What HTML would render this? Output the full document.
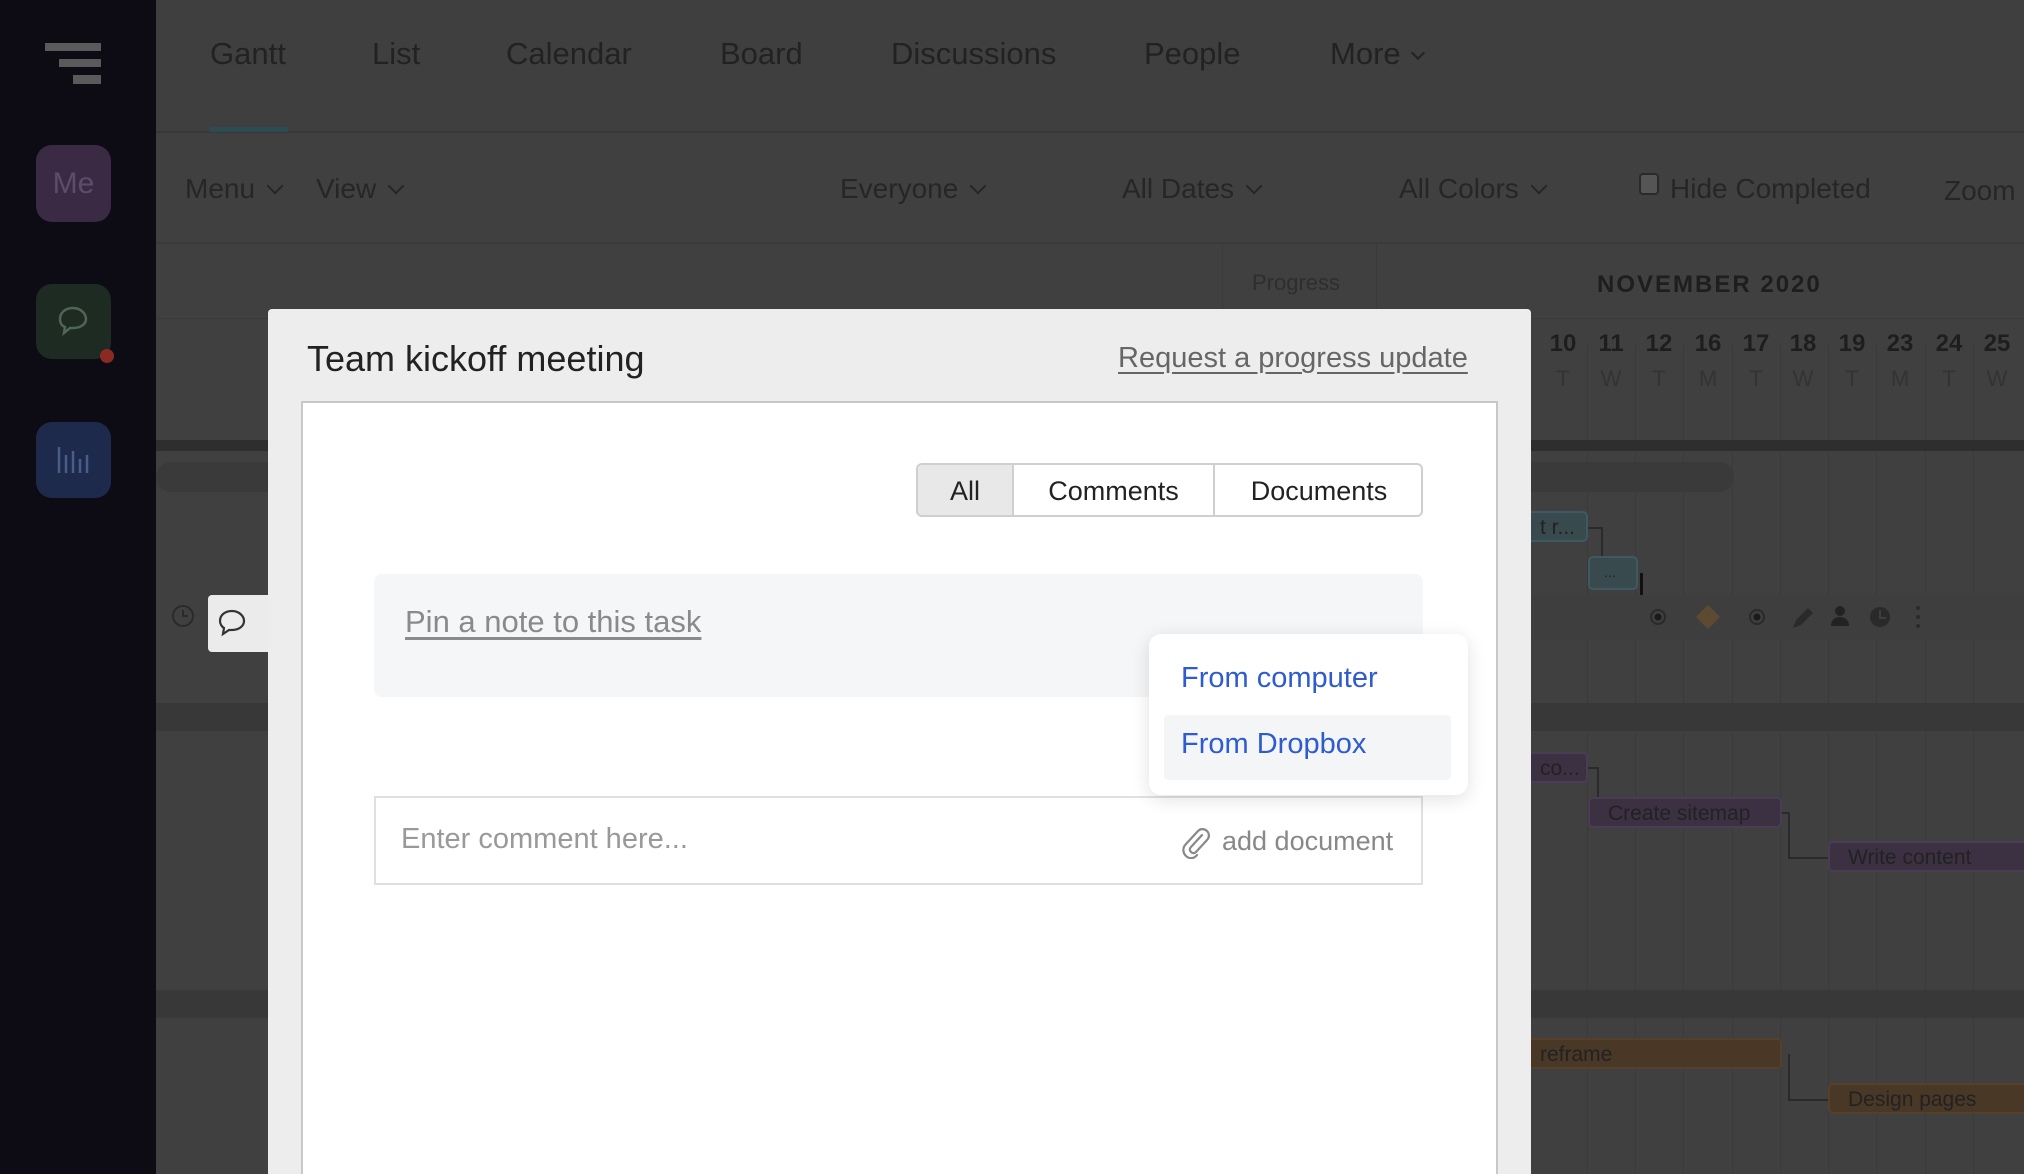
<!DOCTYPE html>
<html><head><meta charset="utf-8"><style>
*{margin:0;padding:0;box-sizing:border-box}
html,body{width:2024px;height:1174px;overflow:hidden}
body{background:#404040;font-family:"Liberation Sans",sans-serif;position:relative}
.a{position:absolute;white-space:nowrap}
.side{left:0;top:0;width:156px;height:1174px;background:#0d0c14}
.nav{left:156px;top:0;right:0;height:133px;background:#3f3f3f;border-bottom:2px solid #383838}
.tab{top:36px;font-size:31px;color:#222}
.tb{top:173px;font-size:28px;color:#262626}
.chev{display:inline-block;width:12px;height:12px;border-right:2.5px solid #262626;border-bottom:2.5px solid #262626;transform:rotate(45deg);margin-left:14px;position:relative;top:-6px}
.vl{top:345px;width:1px;height:830px;background:#3a3a3a}
.dn{top:330px;font-size:24px;font-weight:bold;color:#1e1e1e;width:40px;text-align:center}
.dl{top:366px;font-size:22px;color:#333;width:40px;text-align:center}
.bar{height:31px;border-radius:5px;font-size:21px;color:#222;padding-left:18px;line-height:29px}
</style></head><body>
<div class="a side"></div>
<svg class="a" style="left:45px;top:43px" width="56" height="42"><rect x="0" y="0" width="56" height="8" fill="#5a5a5a"/><rect x="14" y="16" width="42" height="8" fill="#5a5a5a"/><rect x="28" y="32" width="28" height="9" fill="#5a5a5a"/></svg>
<div class="a" style="left:36px;top:145px;width:75px;height:77px;border-radius:16px;background:#3a2a44;color:#5e4d6a;font-size:30px;text-align:center;line-height:77px">Me</div>
<div class="a" style="left:36px;top:284px;width:75px;height:75px;border-radius:16px;background:#1e2b23"></div>
<svg class="a" style="left:55px;top:303px" width="36" height="36"><path d="M18 5C10 5 5 10 5 16c0 4 2 7 5 8l-1 6 6-5c1 0 2 0 3 0 8 0 13-4 13-9S26 5 18 5z" fill="none" stroke="#4f6657" stroke-width="2.5"/></svg>
<div class="a" style="left:100px;top:349px;width:14px;height:14px;border-radius:50%;background:#8b2a22"></div>
<div class="a" style="left:36px;top:422px;width:75px;height:76px;border-radius:16px;background:#1d2a4c"></div>
<svg class="a" style="left:56px;top:445px" width="36" height="30"><g stroke="#4a5d88" stroke-width="2.5"><line x1="3" y1="2" x2="3" y2="28"/><line x1="10" y1="10" x2="10" y2="28"/><line x1="17" y1="6" x2="17" y2="28"/><line x1="24" y1="14" x2="24" y2="28"/><line x1="31" y1="10" x2="31" y2="28"/></g></svg>

<div class="a nav"></div>
<div class="a tab" style="left:210px">Gantt</div>
<div class="a" style="left:210px;top:127px;width:78px;height:5px;background:#2c4b52"></div>
<div class="a tab" style="left:372px">List</div>
<div class="a tab" style="left:506px">Calendar</div>
<div class="a tab" style="left:720px">Board</div>
<div class="a tab" style="left:891px">Discussions</div>
<div class="a tab" style="left:1144px">People</div>
<div class="a tab" style="left:1330px">More<span class="chev" style="width:10px;height:10px;border-color:#222;border-width:2px;margin-left:12px"></span></div>

<div class="a tb" style="left:185px">Menu<span class="chev"></span></div>
<div class="a tb" style="left:316px">View<span class="chev"></span></div>
<div class="a tb" style="left:840px">Everyone<span class="chev"></span></div>
<div class="a tb" style="left:1122px">All Dates<span class="chev"></span></div>
<div class="a tb" style="left:1399px">All Colors<span class="chev"></span></div>
<div class="a" style="left:1639px;top:173px;width:20px;height:22px;border:2px solid #2a2a2a;border-radius:4px;background:#555"></div>
<div class="a tb" style="left:1670px">Hide Completed</div>
<div class="a tb" style="left:1944px;top:175px">Zoom</div>
<div class="a" style="left:156px;top:242px;right:0;height:2px;background:#3a3a3a"></div>
<div class="a" style="left:1222px;top:244px;width:1px;height:70px;background:#3a3a3a"></div>
<div class="a" style="left:1376px;top:244px;width:1px;height:70px;background:#3a3a3a"></div>
<div class="a" style="left:1252px;top:270px;font-size:22px;color:#2e2e2e">Progress</div>
<div class="a" style="left:1597px;top:271px;font-size:24px;font-weight:bold;color:#1e1e1e;letter-spacing:2px">NOVEMBER 2020</div>
<div class="a" style="left:156px;top:318px;right:0;height:1px;background:#3a3a3a"></div>

<div class="a vl" style="left:1587px"></div><div class="a vl" style="left:1635px"></div><div class="a vl" style="left:1683px"></div><div class="a vl" style="left:1732px"></div><div class="a vl" style="left:1780px"></div><div class="a vl" style="left:1828px"></div><div class="a vl" style="left:1876px"></div><div class="a vl" style="left:1925px"></div><div class="a vl" style="left:1973px"></div>
<div class="a dn" style="left:1543px">10</div><div class="a dn" style="left:1591px">11</div><div class="a dn" style="left:1639px">12</div><div class="a dn" style="left:1688px">16</div><div class="a dn" style="left:1736px">17</div><div class="a dn" style="left:1783px">18</div><div class="a dn" style="left:1832px">19</div><div class="a dn" style="left:1880px">23</div><div class="a dn" style="left:1929px">24</div><div class="a dn" style="left:1977px">25</div>
<div class="a dl" style="left:1543px">T</div><div class="a dl" style="left:1591px">W</div><div class="a dl" style="left:1639px">T</div><div class="a dl" style="left:1688px">M</div><div class="a dl" style="left:1736px">T</div><div class="a dl" style="left:1783px">W</div><div class="a dl" style="left:1832px">T</div><div class="a dl" style="left:1880px">M</div><div class="a dl" style="left:1929px">T</div><div class="a dl" style="left:1977px">W</div>

<div class="a" style="left:156px;top:440px;right:0;height:11px;background:#2e2e2e"></div>
<div class="a" style="left:156px;top:462px;width:1578px;height:30px;border-radius:15px;background:#3a3a3a"></div>
<div class="a" style="left:156px;top:703px;right:0;height:28px;background:#383838"></div>
<div class="a" style="left:156px;top:990px;right:0;height:28px;background:#383838"></div>
<div class="a bar" style="left:1520px;top:511px;width:68px;background:#394a4e;border:2px solid #3e5a60">t r...</div>
<div class="a" style="left:1588px;top:527px;width:14px;height:2px;background:#2a2a2a"></div>
<div class="a" style="left:1601px;top:527px;width:2px;height:30px;background:#2a2a2a"></div>
<div class="a bar" style="left:1588px;top:556px;width:50px;height:34px;background:#394a4e;border:2px solid #3e5a60;padding-left:14px;font-size:14px">...</div>
<div class="a" style="left:1640px;top:573px;width:3px;height:22px;background:#111"></div>
<div class="a" style="left:1500px;top:595px;width:524px;height:45px;background:#3e3e3e"></div>
<svg class="a" style="left:1640px;top:598px" width="300" height="40">
 <circle cx="18" cy="19" r="7" fill="none" stroke="#2a2a2a" stroke-width="2"/><circle cx="18" cy="19" r="3.5" fill="#1a1a1a"/>
 <path d="M68 7L80 19L68 31L56 19Z" fill="#5e4a30"/>
 <circle cx="117" cy="19" r="7" fill="none" stroke="#2a2a2a" stroke-width="2"/><circle cx="117" cy="19" r="3.5" fill="#1a1a1a"/>
 <path d="M153 30l3-8 12-12 5 5-12 12z" fill="#2a2a2a"/>
 <circle cx="200" cy="13" r="5" fill="#222"/><path d="M191 28c0-6 4-9 9-9s9 3 9 9z" fill="#222"/>
 <circle cx="240" cy="19" r="10" fill="#2a2a2a"/><path d="M240 12v8h6" stroke="#3e3e3e" stroke-width="2" fill="none"/>
 <circle cx="278" cy="10" r="2" fill="#2a2a2a"/><circle cx="278" cy="19" r="2" fill="#2a2a2a"/><circle cx="278" cy="28" r="2" fill="#2a2a2a"/>
</svg>
<div class="a bar" style="left:1520px;top:752px;width:68px;background:#3b3142;border:2px solid #4a3c54">co...</div>
<div class="a" style="left:1588px;top:767px;width:10px;height:2px;background:#2a2a2a"></div>
<div class="a" style="left:1597px;top:767px;width:2px;height:30px;background:#2a2a2a"></div>
<div class="a bar" style="left:1588px;top:797px;width:194px;background:#3b3142;border:2px solid #4a3c54">Create sitemap</div>
<div class="a" style="left:1782px;top:812px;width:6px;height:2px;background:#2a2a2a"></div>
<div class="a" style="left:1788px;top:812px;width:2px;height:47px;background:#2a2a2a"></div>
<div class="a" style="left:1788px;top:857px;width:40px;height:2px;background:#2a2a2a"></div>
<div class="a bar" style="left:1828px;top:841px;width:200px;background:#3b3142;border:2px solid #4a3c54">Write content</div>
<div class="a bar" style="left:1520px;top:1038px;width:262px;background:#4a3826;border:2px solid #55402a">reframe</div>
<div class="a" style="left:1788px;top:1054px;width:2px;height:46px;background:#2a2a2a"></div>
<div class="a" style="left:1788px;top:1099px;width:40px;height:2px;background:#2a2a2a"></div>
<div class="a bar" style="left:1828px;top:1083px;width:200px;background:#4a3826;border:2px solid #55402a">Design pages</div>

<svg class="a" style="left:170px;top:603px" width="26" height="26"><circle cx="13" cy="13" r="10" fill="none" stroke="#2a2a2a" stroke-width="2"/><path d="M13 7v6h5" fill="none" stroke="#2a2a2a" stroke-width="2"/></svg>
<div class="a" style="left:208px;top:595px;width:62px;height:57px;background:#ebebeb;border-radius:4px 0 0 4px"></div>
<svg class="a" style="left:216px;top:608px" width="32" height="30"><path d="M16 3C9 3 4 7 4 13c0 3 2 6 4 7l-1 6 6-4c1 0 2 0 3 0 7 0 12-4 12-9S23 3 16 3z" fill="none" stroke="#333" stroke-width="2.2"/></svg>

<div class="a" style="left:268px;top:309px;width:1263px;height:865px;background:#ededed;border-radius:4px 4px 0 0"></div>
<div class="a" style="left:307px;top:338px;font-size:36px;color:#222">Team kickoff meeting</div>
<div class="a" style="left:1118px;top:342px;font-size:29px;color:#666;text-decoration:underline;text-underline-offset:5px">Request a progress update</div>
<div class="a" style="left:301px;top:401px;width:1197px;height:773px;background:#fff;border:2px solid #c8c8c8;border-bottom:none"></div>
<div class="a" style="left:916px;top:463px;width:507px;height:54px;border:2px solid #cfcfcf;border-radius:6px;background:#fff;overflow:hidden">
 <div class="a" style="left:0;top:0;width:96px;height:52px;background:#e8e8e8;border-right:2px solid #cfcfcf;font-size:27px;color:#222;text-align:center;line-height:52px">All</div>
 <div class="a" style="left:96px;top:0;width:201px;height:52px;border-right:2px solid #cfcfcf;font-size:27px;color:#222;text-align:center;line-height:52px">Comments</div>
 <div class="a" style="left:297px;top:0;width:208px;height:52px;font-size:27px;color:#222;text-align:center;line-height:52px">Documents</div>
</div>
<div class="a" style="left:374px;top:574px;width:1049px;height:123px;background:#f5f6f7;border-radius:8px"></div>
<div class="a" style="left:405px;top:604px;font-size:31px;color:#8a8a8a;text-decoration:underline;text-underline-offset:5px">Pin a note to this task</div>
<div class="a" style="left:374px;top:796px;width:1049px;height:89px;border:2px solid #e0e0e0;background:#fff"></div>
<div class="a" style="left:401px;top:823px;font-size:29px;color:#999">Enter comment here...</div>
<svg class="a" style="left:1180px;top:827px" width="30" height="32"><path d="M22 8L11 20c-2 2-1 4 0 5s3 2 5 0L27 13c3-3 2-7 0-9s-6-3-9 0L6 17c-4 4-3 9 0 12s8 3 11-1" fill="none" stroke="#888" stroke-width="2.2" stroke-linecap="round"/></svg>
<div class="a" style="left:1222px;top:826px;font-size:27px;color:#888">add document</div>
<div class="a" style="left:1149px;top:634px;width:319px;height:161px;background:#fff;border-radius:12px;box-shadow:0 4px 18px rgba(0,0,0,.12)"></div>
<div class="a" style="left:1164px;top:715px;width:287px;height:65px;background:#f4f5f7;border-radius:4px"></div>
<div class="a" style="left:1181px;top:662px;font-size:29px;color:#2f5bd0">From computer</div>
<div class="a" style="left:1181px;top:728px;font-size:29px;color:#2f5bd0">From Dropbox</div>
</body></html>
